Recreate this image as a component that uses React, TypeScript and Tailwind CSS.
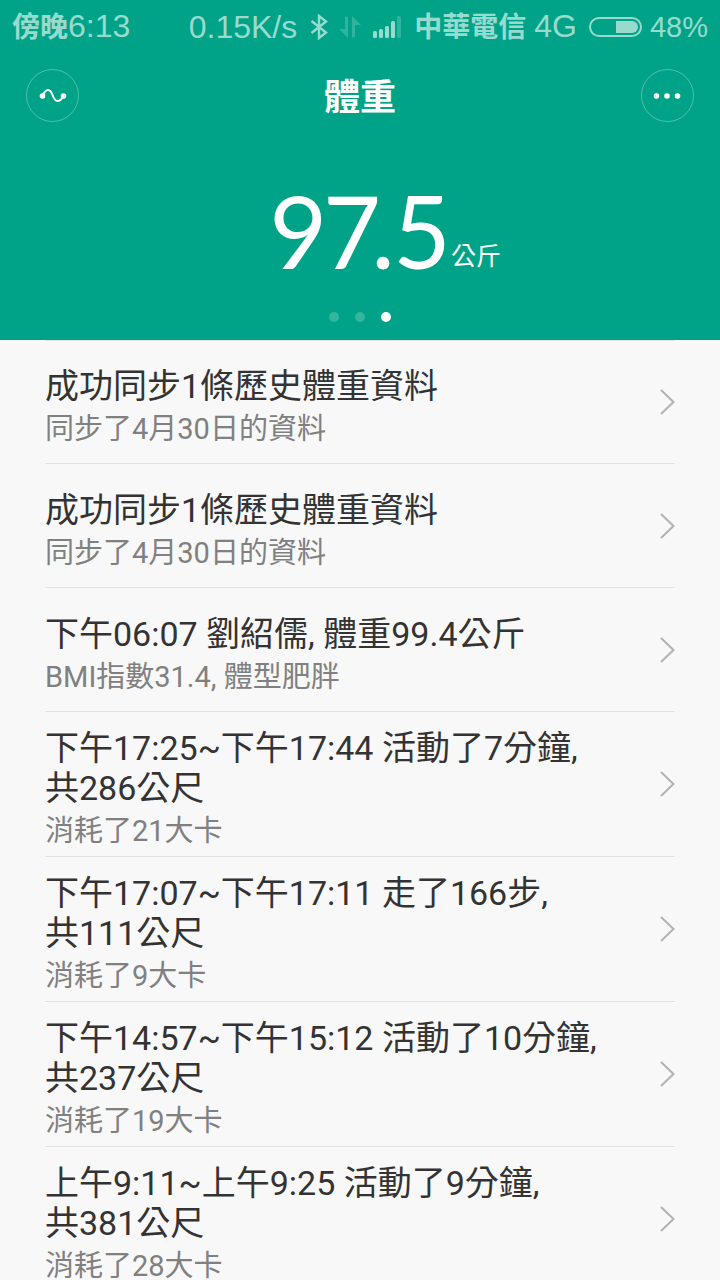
const records = [
  { title: ["成功同步1條歷史體重資料"], detail: "同步了4月30日的資料" },
  { title: ["成功同步1條歷史體重資料"], detail: "同步了4月30日的資料" },
  { title: ["下午06:07 劉紹儒, 體重99.4公斤"], detail: "BMI指數31.4, 體型肥胖" },
  { title: ["下午17:25~下午17:44 活動了7分鐘,", "共286公尺"], detail: "消耗了21大卡" },
  { title: ["下午17:07~下午17:11 走了166步,", "共111公尺"], detail: "消耗了9大卡" },
  { title: ["下午14:57~下午15:12 活動了10分鐘,", "共237公尺"], detail: "消耗了19大卡" },
  { title: ["上午9:11~上午9:25 活動了9分鐘,", "共381公尺"], detail: "消耗了28大卡" },
];

function StatusBar() {
  return (
    <div className="flex h-[53px] items-center justify-between px-3 font-['Liberation_Sans','Noto_Sans_CJK_TC',sans-serif] text-[32px] leading-[40px] whitespace-nowrap text-[#99dacf]">
      <div className="flex items-baseline">
        <span className="text-[28px] font-bold">傍晚</span>
        <span>6:13</span>
      </div>
      <div className="flex items-center">
        <span>0.15K/s</span>
        <svg className="ml-3 h-[26px] w-[20px]" viewBox="0 0 20 26" fill="none" stroke="currentColor" strokeWidth="2.4" aria-hidden="true">
          <path d="M2.5 7 L17 18.5 L10 24 V2 L17 7.5 L2.5 19" />
        </svg>
        <svg className="ml-[10px] h-[22px] w-[22px] opacity-30" viewBox="0 0 22 22" fill="currentColor" aria-hidden="true">
          <path d="M6 1 Q7.5 0 9 1 V22 L0 13 H6Z M13 0 L22 9 H16 V21 Q14.500 22 13 21Z" />
        </svg>
        <svg className="ml-3 h-[22px] w-[28px]" viewBox="0 0 28 22" fill="currentColor" aria-hidden="true">
          <rect x="0" y="15" width="4" height="7" rx="1.5" />
          <rect x="6" y="13" width="4" height="9" rx="1.5" />
          <rect x="12" y="10" width="4" height="12" rx="1.5" />
          <rect x="18" y="5" width="4" height="17" rx="1.500" />
          <rect x="24" y="0" width="4" height="22" rx="1.5" opacity="0.3" />
        </svg>
        <div className="ml-[13px] flex items-baseline gap-2">
          <span className="text-[28px] font-bold">中華電信</span>
          <span>4G</span>
        </div>
        <svg className="ml-3 h-[20px] w-[53px]" viewBox="0 0 53 20" fill="none" aria-hidden="true">
          <rect x="1" y="1" width="51" height="18" rx="9" stroke="currentColor" strokeWidth="2" />
          <path d="M27 4 H43 A6 6 0 0 1 43 16 H27Z" fill="currentColor" />
        </svg>
        <span className="ml-2 text-[29px]">48%</span>
      </div>
    </div>
  );
}

function Header() {
  return (
    <header className="shrink-0 bg-[#00a388] text-white">
      <StatusBar />
      <div className="flex items-center justify-between px-[26px] pt-4">
        <button type="button" aria-label="趨勢" className="flex size-[53px] items-center justify-center rounded-full border border-white/30">
          <svg className="h-[16px] w-[28px]" viewBox="0 0 28 16" fill="none" stroke="currentColor" strokeWidth="2" aria-hidden="true">
            <path d="M3.500 8 C5 4.500 6.500 2 9 2 C14.500 2 13 13 18.500 13 C21 13 22.500 11.500 24.500 8" />
            <circle cx="3.500" cy="8" r="2.800" fill="currentColor" stroke="none" />
            <circle cx="24.500" cy="8" r="2.800" fill="currentColor" stroke="none" />
          </svg>
        </button>
        <h1 className="pt-1 text-[36px] leading-[48px] font-bold">體重</h1>
        <button type="button" aria-label="更多" className="flex size-[53px] items-center justify-center rounded-full border border-white/30">
          <svg className="h-[6px] w-[28px]" viewBox="0 0 28 6" fill="currentColor" aria-hidden="true">
            <circle cx="3.500" cy="3" r="2.800" />
            <circle cx="14" cy="3" r="2.800" />
            <circle cx="24.500" cy="3" r="2.800" />
          </svg>
        </button>
      </div>
      <div className="flex justify-center pt-[52px]">
        <p className="relative font-['Lato',sans-serif] text-[100px] leading-[112px] proportional-nums">
          97.5
          <span className="absolute bottom-3.5 left-full ml-0.5 font-['Noto_Sans_CJK_TC',sans-serif] text-[25px] leading-[36px] whitespace-nowrap">
            公斤
          </span>
        </p>
      </div>
      <div className="flex justify-center gap-4 pt-[26px] pb-[18px]">
        <span className="size-[10px] rounded-full bg-white/20" />
        <span className="size-[10px] rounded-full bg-white/20" />
        <span className="size-[10px] rounded-full bg-white" />
      </div>
    </header>
  );
}

export default function App() {
  return (
    <div className="flex h-screen flex-col bg-[#f8f8f8] font-['Roboto','Noto_Sans_CJK_TC',sans-serif]">
      <Header />
      <main className="min-h-0 flex-1 overflow-y-auto px-[45px] [scrollbar-width:none]">
        <ul className="border-t border-[#e2e2e2]">
          {records.map((record, index) => (
            <li key={index} className="border-b border-[#e2e2e2] first:-mt-px">
              <a href="#record" className="flex min-h-[123px] items-center justify-between">
                <div className="pt-4 pb-2">
                  <h2 className="text-[34px] leading-[40px] text-[#333333]">
                    {record.title.map((line) => (
                      <span key={line} className="block">{line}</span>
                    ))}
                  </h2>
                  <p className="mt-1.5 text-[29px] leading-[34px] text-[#808080]">{record.detail}</p>
                </div>
                <svg className="h-[26px] w-[16px] shrink-0" viewBox="0 0 16 26" fill="none" stroke="#b2b2b2" strokeWidth="2" aria-hidden="true">
                  <path d="M2 1 L14.500 13 L2 25" />
                </svg>
              </a>
            </li>
          ))}
        </ul>
      </main>
    </div>
  );
}
